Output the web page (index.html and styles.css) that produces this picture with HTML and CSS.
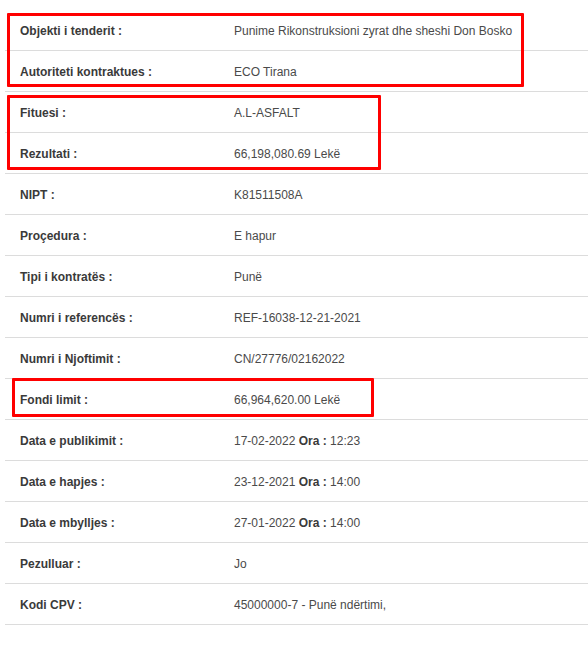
FILE: index.html
```html
<!DOCTYPE html>
<html>
<head>
<meta charset="utf-8">
<link rel="stylesheet" href="styles.css">
</head>
<body>
<div class="page">
  <div class="table">
    <div class="row"><div class="label">Objekti i tenderit :</div><div class="value">Punime Rikonstruksioni zyrat dhe sheshi Don Bosko</div></div>
    <div class="row"><div class="label">Autoriteti kontraktues :</div><div class="value">ECO Tirana</div></div>
    <div class="row"><div class="label">Fituesi :</div><div class="value">A.L-ASFALT</div></div>
    <div class="row"><div class="label">Rezultati :</div><div class="value">66,198,080.69 Lekë</div></div>
    <div class="row"><div class="label">NIPT :</div><div class="value">K81511508A</div></div>
    <div class="row"><div class="label">Proçedura :</div><div class="value">E hapur</div></div>
    <div class="row"><div class="label">Tipi i kontratës :</div><div class="value">Punë</div></div>
    <div class="row"><div class="label">Numri i referencës :</div><div class="value">REF-16038-12-21-2021</div></div>
    <div class="row"><div class="label">Numri i Njoftimit :</div><div class="value">CN/27776/02162022</div></div>
    <div class="row"><div class="label">Fondi limit :</div><div class="value">66,964,620.00 Lekë</div></div>
    <div class="row"><div class="label">Data e publikimit :</div><div class="value">17-02-2022 <b>Ora :</b> 12:23</div></div>
    <div class="row"><div class="label">Data e hapjes :</div><div class="value">23-12-2021 <b>Ora :</b> 14:00</div></div>
    <div class="row"><div class="label">Data e mbylljes :</div><div class="value">27-01-2022 <b>Ora :</b> 14:00</div></div>
    <div class="row"><div class="label">Pezulluar :</div><div class="value">Jo</div></div>
    <div class="row"><div class="label">Kodi CPV :</div><div class="value">45000000-7 - Punë ndërtimi,</div></div>
  </div>
  <div class="mark mark-1"></div>
  <div class="mark mark-2"></div>
  <div class="mark mark-3"></div>
</div>
</body>
</html>
```
FILE: styles.css
```css
html, body {
  margin: 0;
  padding: 0;
  background: #fff;
}
.page {
  position: relative;
  width: 588px;
  height: 645px;
  padding: 10px 0 0 5px;
  box-sizing: border-box;
  font-family: "Liberation Sans", Arial, sans-serif;
  font-size: 12px;
  color: #333;
}
.table {
  display: flex;
  flex-direction: column;
}
.row {
  display: grid;
  grid-template-columns: 229px 1fr;
  height: 40px;
  padding-top: 2px;
  box-sizing: content-box;
  align-items: center;
  border-bottom: 1px solid #dcdcdc;
}
.row {
  height: 38px;
}
.label {
  padding-left: 15px;
  font-weight: bold;
  color: #3a3a3a;
}
.value {
  color: #4a4a4a;
}
.value b {
  color: #3a3a3a;
}
.mark {
  position: absolute;
  border: 3px solid #ff0000;
  border-radius: 1px;
  box-sizing: border-box;
}
.mark-1 { left: 7px; top: 13px; width: 517px; height: 74px; }
.mark-2 { left: 7px; top: 95px; width: 374px; height: 75px; }
.mark-3 { left: 12px; top: 378px; width: 362px; height: 39px; }
```
